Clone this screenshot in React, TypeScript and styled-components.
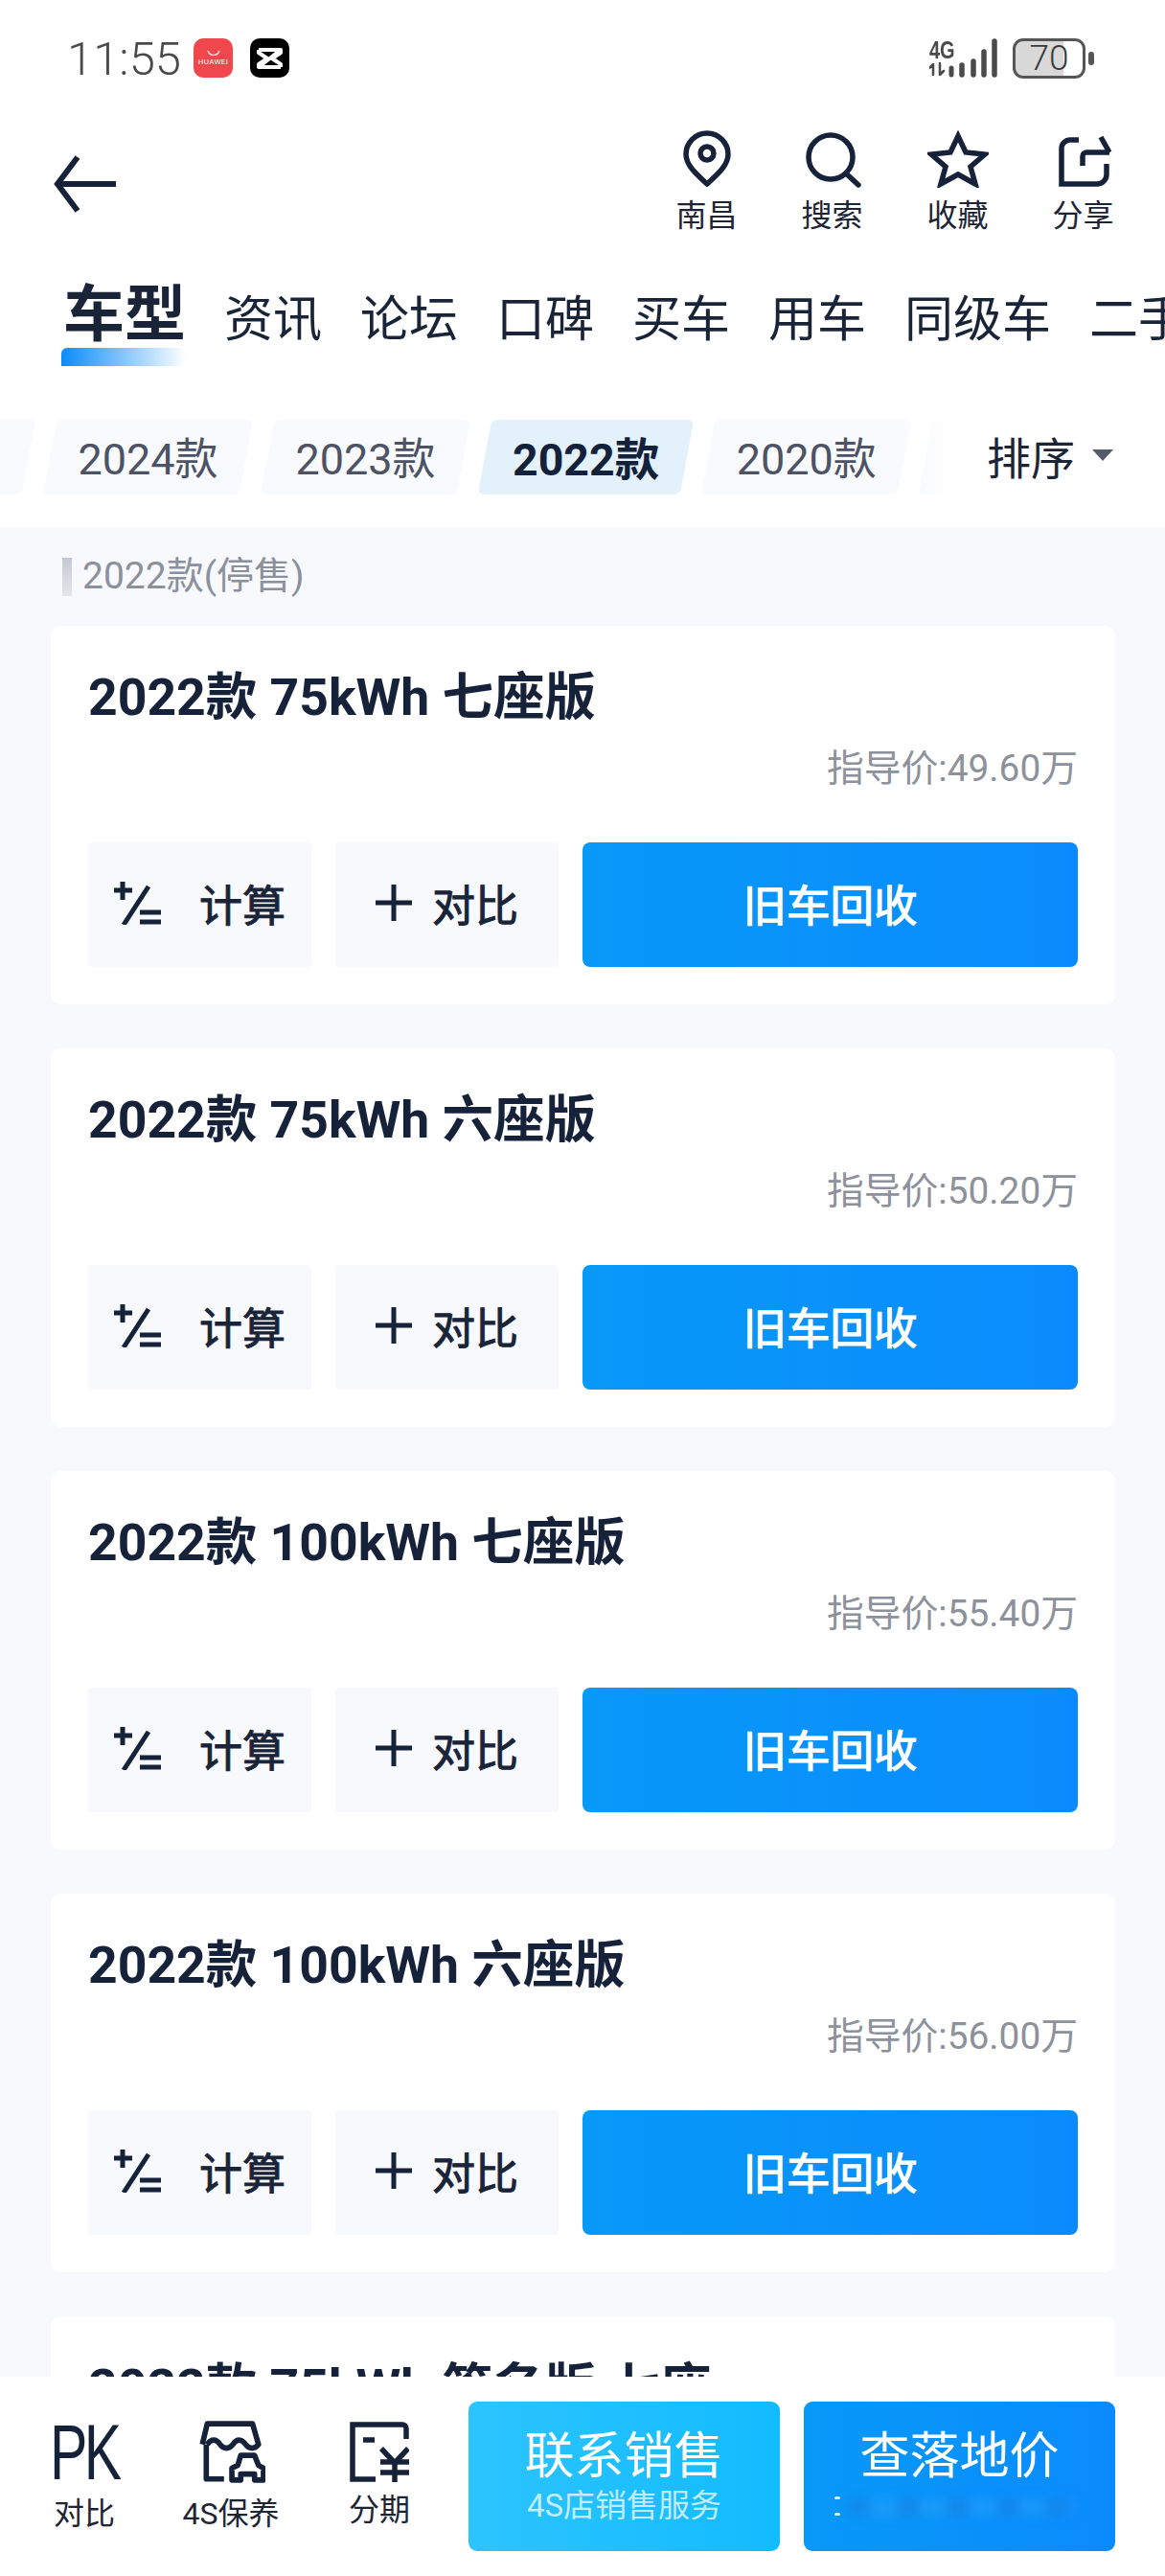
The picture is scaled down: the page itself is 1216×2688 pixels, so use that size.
import styled, { createGlobalStyle } from 'styled-components';

const GlobalStyle = createGlobalStyle`
  html, body {
    margin: 0;
    padding: 0;
    background: #fff;
    font-family: Roboto, "Noto Sans CJK SC", sans-serif;
  }
  * { box-sizing: border-box; }
`;

const Page = styled.div`
  width: 1216px;
  height: 2688px;
  display: flex;
  flex-direction: column;
  overflow: hidden;
  background: #fff;
  color: #15223a;
`;

const StatusBar = styled.div`
  height: 122px;
  padding: 40px 74px 0 70px;
  display: flex;
  align-items: flex-start;
`;

const Clock = styled.span`
  font-size: 49px;
  line-height: 44px;
  font-weight: 300;
  color: #4a4a4a;
  width: 132px;
`;

const AppBadge = styled.div<{ $bg: string }>`
  width: 41px;
  height: 41px;
  border-radius: 10px;
  background: ${(p) => p.$bg};
  margin-right: 18px;
  display: flex;
  flex-direction: column;
  align-items: center;
  justify-content: center;
  color: #fff;
`;

const BadgeText = styled.span`
  font-size: 8px;
  line-height: 9px;
  letter-spacing: 0.3px;
`;

const StatusRight = styled.div`
  margin-left: auto;
  display: flex;
  align-items: flex-start;
`;

const Network = styled.div`
  width: 72px;
  height: 41px;
  margin-right: 15px;
  position: relative;
`;

const NetLabel = styled.span`
  position: absolute;
  left: 0;
  top: 0;
  font-size: 25px;
  line-height: 24px;
  font-weight: 700;
  color: #4a4a4a;
  font-family: "Liberation Sans", sans-serif;
  transform: scaleX(0.8);
  transform-origin: left top;
`;

const Battery = styled.div`
  width: 76px;
  height: 42px;
  border: 3px solid #555;
  border-radius: 11px;
  font-size: 37px;
  font-weight: 300;
  line-height: 36px;
  color: #3a3a3a;
  text-align: center;
  background: linear-gradient(90deg, #d8d8d8 72%, #fff 72%);
`;

const BatteryNub = styled.div`
  width: 6px;
  height: 14px;
  margin: 14px 0 0 3px;
  border-radius: 3px;
  background: #555;
`;

const NavBar = styled.div`
  height: 120px;
  padding: 14px 20px 0 56px;
  display: flex;
  align-items: flex-start;
  justify-content: space-between;
`;

const BackButton = styled.div`
  margin-top: 26px;
  width: 66px;
  height: 60px;
`;

const NavActions = styled.div`
  display: flex;
`;

const NavAction = styled.div`
  width: 131px;
  display: flex;
  flex-direction: column;
  align-items: center;
`;

const NavIcon = styled.div`
  width: 64px;
  height: 60px;
  margin-bottom: 11px;
`;

const NavLabel = styled.span`
  font-size: 32px;
  line-height: 36px;
  color: #1d2434;
`;

const Tabs = styled.div`
  position: relative;
  z-index: 0;
  height: 144px;
  padding: 59px 0 0 66px;
  display: flex;
  gap: 40px;
  overflow: hidden;
  white-space: nowrap;
`;

const Tab = styled.div<{ $active?: boolean }>`
  position: relative;
  flex-shrink: 0;
  font-size: ${(p) => (p.$active ? 64 : 51)}px;
  font-weight: ${(p) => (p.$active ? 700 : 400)};
  line-height: ${(p) => (p.$active ? 62 : 66)}px;
  margin-top: ${(p) => (p.$active ? -3 : 0)}px;
  color: #1a2438;

  ${(p) =>
    p.$active &&
    `
    &::after {
      content: '';
      position: absolute;
      left: -2px;
      right: 0;
      top: 65px;
      height: 19px;
      border-radius: 6px 0 0 0;
      background: linear-gradient(90deg, #0a8cfb 0%, rgba(10, 140, 251, 0) 100%);
      z-index: -1;
    }
  `}
`;

const FilterBar = styled.div`
  height: 164px;
  padding-top: 52px;
  position: relative;
  overflow: hidden;
`;

const ChipRow = styled.div`
  display: flex;
  gap: 22px;
`;

const Chip = styled.div<{ $active?: boolean }>`
  position: relative;
  flex-shrink: 0;
  height: 78px;
  min-width: 205px;
  padding: 0 29px 4px;
  display: flex;
  align-items: center;
  justify-content: center;
  font-size: ${(p) => (p.$active ? 46.5 : 45)}px;
  font-weight: ${(p) => (p.$active ? 700 : 400)};
  color: ${(p) => (p.$active ? '#14213a' : '#4d5364')};
  z-index: 0;

  &::before {
    content: '';
    position: absolute;
    inset: 0;
    z-index: -1;
    border-radius: 6px;
    transform: skewX(-10.5deg);
    background: ${(p) => (p.$active ? '#e3f1fb' : '#f8fafd')};
  }

  &:first-child {
    margin-left: -175px;
  }
`;

const SortPanel = styled.div`
  position: absolute;
  right: 0;
  top: 52px;
  height: 78px;
  width: 256px;
  padding: 0 0 4px 70px;
  display: flex;
  align-items: center;
  gap: 18px;
  background: linear-gradient(90deg, rgba(255, 255, 255, 0) 0, #fff 30px);
  font-size: 46px;
  color: #1d2434;
`;

const SortCaret = styled.span`
  width: 0;
  height: 0;
  border-left: 11px solid transparent;
  border-right: 11px solid transparent;
  border-top: 12px solid #555b6b;
`;

const Content = styled.div`
  flex: 1;
  min-height: 0;
  overflow: hidden;
  background: #f7f9fd;
  padding: 0 52px 0 53px;
`;

const SectionLabel = styled.div`
  height: 103px;
  padding: 29px 0 0 33px;
  font-size: 39px;
  line-height: 44px;
  color: #8b909c;
  position: relative;

  &::before {
    content: '';
    position: absolute;
    left: 12px;
    top: 32px;
    width: 10px;
    height: 40px;
    background: linear-gradient(180deg, #c4c8d2, #e4e6ea);
  }
`;

const Card = styled.div`
  height: 395px;
  margin-bottom: 46px;
  padding: 45px 39px 0;
  background: #fff;
  border-radius: 10px;
  display: flex;
  flex-direction: column;
`;

const CardTitle = styled.div`
  font-size: 53.5px;
  line-height: 60px;
  font-weight: 700;
  color: #15223a;
`;

const CardPrice = styled.div`
  margin-top: 22px;
  text-align: right;
  font-size: 38.8px;
  line-height: 44px;
  color: #8d919b;
`;

const CardButtons = styled.div`
  margin-top: 55px;
  display: flex;
  gap: 25px;
`;

const ToolButton = styled.div`
  flex: 0 0 233px;
  height: 130px;
  padding-bottom: 4px;
  background: #f7f9fc;
  border-radius: 4px;
  display: flex;
  align-items: center;
  justify-content: center;
  font-size: 45px;
  -webkit-text-stroke: 1px #1a2438;
  color: #1a2438;
`;

const ToolIcon = styled.svg<{ $gap: number }>`
  flex-shrink: 0;
  margin-right: ${(p) => p.$gap}px;
`;

const RecycleButton = styled.div`
  flex: 1;
  height: 130px;
  padding-bottom: 4px;
  border-radius: 8px;
  background: linear-gradient(90deg, #0899f8, #0a8bfd);
  display: flex;
  align-items: center;
  justify-content: center;
  font-size: 45.5px;
  -webkit-text-stroke: 1.2px #fff;
  color: #fff;
`;

const BottomBar = styled.div`
  height: 208px;
  flex-shrink: 0;
  background: #fff;
  padding: 26px 52px 0 33px;
  display: flex;
  align-items: flex-start;
`;

const BottomItem = styled.div<{ $width: number }>`
  width: ${(p) => p.$width}px;
  margin-top: 14px;
  display: flex;
  flex-direction: column;
  align-items: center;
`;

const BottomIconBox = styled.div<{ $labelGap?: number }>`
  height: 78px;
  display: flex;
  align-items: center;
  justify-content: center;
  margin-bottom: ${(p) => p.$labelGap ?? 7}px;
`;

const PkMark = styled.span`
  font-family: "Liberation Sans", sans-serif;
  font-size: 82px;
  line-height: 78px;
  letter-spacing: -5px;
  color: #15223a;
  transform: scaleX(0.72);
`;

const BottomLabel = styled.span`
  font-size: 32px;
  line-height: 36px;
  color: #1d2434;
`;

const CtaButton = styled.div<{ $from: string; $to: string; $spacing: number }>`
  width: 325px;
  height: 156px;
  margin-left: ${(p) => p.$spacing}px;
  border-radius: 9px;
  background: linear-gradient(90deg, ${(p) => p.$from}, ${(p) => p.$to});
  color: #fff;
  display: flex;
  flex-direction: column;
  align-items: center;
  padding-top: 27px;
`;

const CtaTitle = styled.span`
  font-size: 52px;
  line-height: 62px;
`;

const CtaSub = styled.span`
  margin-top: 1px;
  font-size: 33px;
  line-height: 38px;
  color: rgba(255, 255, 255, 0.72);
`;

const Smudge = styled.span`
  position: relative;
  margin-top: 6px;
  width: 262px;
  height: 30px;

  &::before {
    content: '';
    position: absolute;
    left: 0;
    top: 4px;
    width: 6px;
    height: 3px;
    border-radius: 2px;
    background: rgba(255, 255, 255, 0.85);
    box-shadow: 0 17px 0 0 rgba(255, 255, 255, 0.85);
  }
`;

const SmudgeBlur = styled.span`
  position: absolute;
  left: 14px;
  right: 10px;
  top: 6px;
  bottom: 6px;
  filter: blur(6px);
  background: repeating-linear-gradient(90deg, rgba(30, 120, 215, 0.45) 0 22px, rgba(60, 170, 250, 0.3) 22px 52px);
`;

// last one peeks out above the bottom bar, only its title shows
const trims = [
  { title: '2022款 75kWh 七座版', price: '49.60' },
  { title: '2022款 75kWh 六座版', price: '50.20' },
  { title: '2022款 100kWh 七座版', price: '55.40' },
  { title: '2022款 100kWh 六座版', price: '56.00' },
  { title: '2022款 75kWh 签名版 七座' },
];

const stroke = '#15223a';

export default function App() {
  return (
    <Page>
      <GlobalStyle />
      <StatusBar>
        <Clock>11:55</Clock>
        <AppBadge $bg="#f0474c">
          <svg width="16" height="8" viewBox="0 0 16 8" fill="none">
            <path d="M2 1c2 6 10 6 12 0" stroke="#fff" strokeWidth="1.2" />
          </svg>
          <BadgeText>HUAWEI</BadgeText>
        </AppBadge>
        <AppBadge $bg="#000">
          <svg width="29" height="26" viewBox="0 0 29 26" fill="none">
            <path d="M3 4h23L3 22h23M3 4v3l9 6-9 6v3M26 4v3l-9 6 9 6v3" stroke="#fff" strokeWidth="4" strokeLinejoin="round" />
          </svg>
        </AppBadge>
        <StatusRight>
          <Network>
            <NetLabel>4G</NetLabel>
            <svg width="72" height="41" viewBox="0 0 72 41" fill="none" stroke="#4a4a4a" strokeLinecap="round">
              <path d="M4 27v11M0 31l4-4M11 26v12M15 34l-4 4" strokeWidth="2.5" />
              <path d="M23 31v7" strokeWidth="5" />
              <path d="M34 28v10" strokeWidth="5.5" />
              <path d="M46 24v14" strokeWidth="5.5" />
              <path d="M57 14v24" strokeWidth="5.5" />
              <path d="M68 3v35" strokeWidth="5.5" />
            </svg>
          </Network>
          <Battery>70</Battery>
          <BatteryNub />
        </StatusRight>
      </StatusBar>

      <NavBar>
        <BackButton>
          <svg width="66" height="60" viewBox="0 0 66 60" fill="none" stroke={stroke} strokeWidth="6">
            <path d="M65 30H4" />
            <path d="M25 2L4 30l21 28" strokeLinejoin="miter" />
          </svg>
        </BackButton>
        <NavActions>
          <NavAction>
            <NavIcon>
              <svg width="64" height="60" viewBox="0 0 64 60" fill="none" stroke={stroke} strokeWidth="5.5">
                <path d="M32 56C20 45 10 36 10 25a22 22 0 0 1 44 0c0 11-10 20-22 31z" strokeLinejoin="round" />
                <circle cx="32" cy="24" r="7" />
              </svg>
            </NavIcon>
            <NavLabel>南昌</NavLabel>
          </NavAction>
          <NavAction>
            <NavIcon>
              <svg width="64" height="60" viewBox="0 0 64 60" fill="none" stroke={stroke} strokeWidth="5.5">
                <circle cx="30" cy="28" r="23" />
                <path d="M46 45l13 12" strokeLinecap="round" />
              </svg>
            </NavIcon>
            <NavLabel>搜索</NavLabel>
          </NavAction>
          <NavAction>
            <NavIcon>
              <svg width="64" height="60" viewBox="0 0 64 60" fill="none" stroke={stroke} strokeWidth="5.5">
                <path d="M32 6l8 17 20 2-15 13 5 18-18-10-18 10 5-18L4 25l20-2z" strokeLinejoin="miter" />
              </svg>
            </NavIcon>
            <NavLabel>收藏</NavLabel>
          </NavAction>
          <NavAction>
            <NavIcon>
              <svg width="64" height="60" viewBox="0 0 64 60" fill="none" stroke={stroke} strokeWidth="5.5">
                <path d="M27 10H18a9 9 0 0 0-9 9v37h37a10 10 0 0 0 10-10V35" />
                <path d="M31 37V27a4 4 0 0 1 4-4h24M50 7l9 16" />
              </svg>
            </NavIcon>
            <NavLabel>分享</NavLabel>
          </NavAction>
        </NavActions>
      </NavBar>

      <Tabs>
        <Tab $active>车型</Tab>
        <Tab>资讯</Tab>
        <Tab>论坛</Tab>
        <Tab>口碑</Tab>
        <Tab>买车</Tab>
        <Tab>用车</Tab>
        <Tab>同级车</Tab>
        <Tab>二手车</Tab>
      </Tabs>

      <FilterBar>
        <ChipRow>
          <Chip />
          <Chip>2024款</Chip>
          <Chip>2023款</Chip>
          <Chip $active>2022款</Chip>
          <Chip>2020款</Chip>
          <Chip />
        </ChipRow>
        <SortPanel>
          排序
          <SortCaret />
        </SortPanel>
      </FilterBar>

      <Content>
        <SectionLabel>2022款(停售)</SectionLabel>
        {trims.map((trim) => (
          <Card key={trim.title}>
            <CardTitle>{trim.title}</CardTitle>
            {trim.price && (
              <>
                <CardPrice>指导价:{trim.price}万</CardPrice>
                <CardButtons>
                  <ToolButton>
                    <ToolIcon $gap={40} width="49" height="46" viewBox="0 0 49 46" fill="none" stroke="#15223a" strokeWidth="5">
                      <path d="M9 1v19M0 10h19M36 6L10 46M27 33h22M27 43h22" />
                    </ToolIcon>
                    计算
                  </ToolButton>
                  <ToolButton>
                    <ToolIcon $gap={21} width="38" height="38" viewBox="0 0 38 38" fill="none" stroke="#15223a" strokeWidth="5">
                      <path d="M19 0v38M0 19h38" />
                    </ToolIcon>
                    对比
                  </ToolButton>
                  <RecycleButton>旧车回收</RecycleButton>
                </CardButtons>
              </>
            )}
          </Card>
        ))}
      </Content>

      <BottomBar>
        <BottomItem $width={110}>
          <BottomIconBox>
            <PkMark>PK</PkMark>
          </BottomIconBox>
          <BottomLabel>对比</BottomLabel>
        </BottomItem>
        <BottomItem $width={196}>
          <BottomIconBox>
            <svg width="72" height="66" viewBox="0 0 70 64" fill="none" stroke={stroke} strokeWidth="5.5">
              <path d="M10 24v35h18M6 24L11 3h46l6 21c-4 5-9 5-13 0-4-6-9-6-13 0-4 5-9 5-13 0-4-6-9-6-13 0" strokeLinejoin="round" />
              <path d="M36 60V48l6-3 3-10h14l4 10 5 3v12h-9v-6H45v6z" strokeLinejoin="round" />
            </svg>
          </BottomIconBox>
          <BottomLabel>4S保养</BottomLabel>
        </BottomItem>
        <BottomItem $width={114}>
          <BottomIconBox $labelGap={3}>
            <svg width="62" height="64" viewBox="0 0 62 64" fill="none" stroke={stroke} strokeWidth="5.5">
              <path d="M27 60H3V3h52a4 4 0 0 1 4 4v11" />
              <path d="M14 19h12M33 28l14 15 14-15M47 43v20M32 42h30M32 53h30" />
            </svg>
          </BottomIconBox>
          <BottomLabel>分期</BottomLabel>
        </BottomItem>
        <CtaButton $from="#2cc4fe" $to="#12bbff" $spacing={36}>
          <CtaTitle>联系销售</CtaTitle>
          <CtaSub>4S店销售服务</CtaSub>
        </CtaButton>
        <CtaButton $from="#0899f8" $to="#0a8bfd" $spacing={25}>
          <CtaTitle>查落地价</CtaTitle>
          <Smudge>
            <SmudgeBlur />
          </Smudge>
        </CtaButton>
      </BottomBar>
    </Page>
  );
}
